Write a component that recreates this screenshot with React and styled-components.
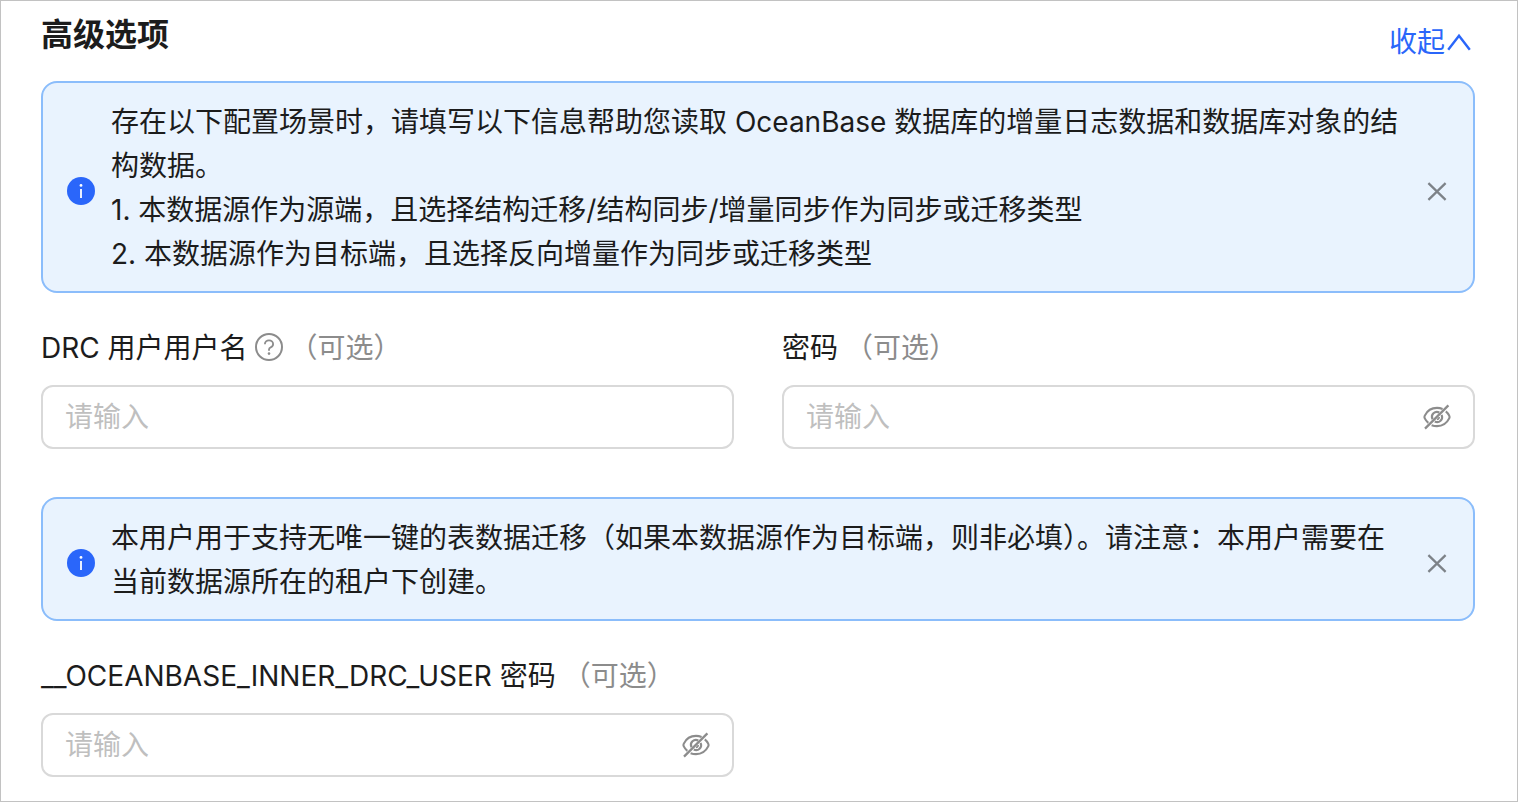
import React from 'react';
import styled, { createGlobalStyle } from 'styled-components';

const GlobalStyle = createGlobalStyle`
    *, *::before, *::after {
        box-sizing: border-box;
    }

    html, body, #root {
        height: 100%;
    }

    body {
        margin: 0;
        background: #fff;
        color: #1c1c1c;
        font-family: Inter, "Noto Sans CJK SC", sans-serif;
        font-size: 28px;
        line-height: 44px;
    }
`;

const Panel = styled.section`
    min-height: 100%;
    padding: 8px 42px 24px 40px;
    border: 1px solid #c2c2c2;
`;

const Header = styled.header`
    display: flex;
    justify-content: space-between;
    align-items: flex-end;
    padding-top: 2px;
    margin-bottom: 16px;
`;

const Title = styled.h2`
    margin: 0;
    padding-bottom: 6px;
    font-size: 32px;
    font-weight: 600;
    line-height: 48px;
`;

const CollapseLink = styled.a`
    display: inline-flex;
    align-items: center;
    gap: 2px;
    padding: 0 4px 1px 0;
    color: #2a66fa;
    text-decoration: none;
`;

const AlertBox = styled.div`
    display: flex;
    align-items: center;
    gap: 16px;
    padding: 17px 24px 15px;
    border: 2px solid #8bbdfb;
    border-radius: 16px;
    background: #e9f3fe;
`;

const AlertIcon = styled.span`
    display: flex;
    flex: none;
    padding-top: 6px;
`;

const AlertText = styled.div`
    flex: 1;
    min-width: 0;

    p {
        margin: 0;
    }
`;

const IconButton = styled.button`
    display: flex;
    flex: none;
    padding: 0;
    border: 0;
    background: none;
    color: #8c8c8c;
    cursor: pointer;
`;

const CloseButton = styled(IconButton)`
    padding-top: 6px;
    color: #7d8288;
`;

const FieldRow = styled.div`
    display: grid;
    grid-template-columns: 1fr 1fr;
    gap: 48px;
    padding-top: 32px;

    & + ${AlertBox} {
        margin-top: 48px;
    }
`;

const FieldHead = styled.div`
    display: flex;
    align-items: center;
    gap: 7px;
    margin-bottom: 16px;
`;

const FieldLabel = styled.label`
    padding-top: 2px;
    line-height: 42px;
`;

const Optional = styled.span`
    padding-top: 2px;
    line-height: 42px;
    color: #8c8c8c;
`;

const InputBox = styled.div`
    display: flex;
    align-items: center;
    gap: 8px;
    height: 64px;
    padding: 0 22px;
    border: 2px solid #d9d9d9;
    border-radius: 12px;
    background: #fff;
`;

const TextInput = styled.input`
    flex: 1;
    min-width: 0;
    padding: 0;
    border: 0;
    outline: 0;
    background: none;
    color: inherit;
    font: inherit;

    &::placeholder {
        color: #bfbfbf;
        opacity: 1;
    }
`;

const ChevronUpIcon = () => (
    <svg width="24" height="24" viewBox="0 0 24 24" fill="none" stroke="currentColor" strokeWidth="2.4" aria-hidden="true">
        <path d="M1.2 19.8 12 5.8l10.800 14" />
    </svg>
);

const InfoIcon = () => (
    <svg width="28" height="28" viewBox="0 0 28 28" aria-hidden="true">
        <circle cx="14" cy="14" r="14" fill="#2a66fa" />
        <circle cx="14" cy="8.4" r="1.4" fill="#fff" />
        <path d="M14 12v9" stroke="#fff" strokeWidth="1.8" />
    </svg>
);

const CloseIcon = () => (
    <svg width="24" height="24" viewBox="0 0 24 24" fill="none" stroke="currentColor" strokeWidth="2.3" aria-hidden="true">
        <path d="M3.4 4.200l17.200 16.600M20.600 4.200L3.400 20.800" />
    </svg>
);

const QuestionIcon = () => (
    <svg width="28" height="28" viewBox="0 0 28 28" fill="none" stroke="currentColor" aria-hidden="true">
        <circle cx="14" cy="14" r="13" strokeWidth="2" />
        <path d="M9.9 11.2c0-2.3 1.8-3.9 4.1-3.9s4.1 1.6 4.1 3.7c0 1.7-1 2.8-2.4 3.4-1.1.5-1.7 1.2-1.7 2.2v1.2" strokeWidth="1.8" />
        <circle cx="14" cy="20.6" r="1.3" fill="currentColor" stroke="none" />
    </svg>
);

const EyeInvisibleIcon = () => (
    <svg width="28" height="28" viewBox="0 0 28 28" fill="none" stroke="currentColor" strokeWidth="2.1" aria-hidden="true">
        <path d="M19.6 6A15 15 0 0 0 14 4.9C8.6 4.9 4.3 7.5 1.8 12.6a3.2 3.2 0 0 0 0 2.8c.9 1.800 2.100 3.300 3.500 4.500" />
        <path d="M8.600 22.200c1.700.6 3.500.9 5.400.9 5.400 0 9.700-2.600 12.200-7.700a3.200 3.200 0 0 0 0-2.800c-.9-1.800-2-3.200-3.400-4.300" />
        <path d="M16.300 9.500a5 5 0 0 0-6.800 6.700" />
        <path d="M11.800 18.500a5 5 0 0 0 6.800-6.600" />
        <path d="M13.900 16.400a2.300 2.300 0 0 0 2.300-2.300" strokeWidth="1.600" />
        <path d="M2 25.600 25.400 2.400" strokeWidth="2.300" />
    </svg>
);

const Alert = ({ children }) => (
    <AlertBox role="note">
        <AlertIcon>
            <InfoIcon />
        </AlertIcon>
        <AlertText>{children}</AlertText>
        <CloseButton type="button" aria-label="关闭">
            <CloseIcon />
        </CloseButton>
    </AlertBox>
);

const Field = ({ id, label, help, password }) => (
    <div>
        <FieldHead>
            <FieldLabel htmlFor={id}>{label}</FieldLabel>
            {help && (
                <IconButton type="button" aria-label="帮助">
                    <QuestionIcon />
                </IconButton>
            )}
            <Optional>（可选）</Optional>
        </FieldHead>
        <InputBox>
            <TextInput id={id} type={password ? 'password' : 'text'} placeholder="请输入" />
            {password && (
                <IconButton type="button" aria-label="显示密码">
                    <EyeInvisibleIcon />
                </IconButton>
            )}
        </InputBox>
    </div>
);

const App = () => {
    return (
        <>
            <GlobalStyle />
            <Panel>
                <Header>
                    <Title>高级选项</Title>
                    <CollapseLink href="#">
                        收起
                        <ChevronUpIcon />
                    </CollapseLink>
                </Header>
                <Alert>
                    <p>存在以下配置场景时，请填写以下信息帮助您读取 OceanBase 数据库的增量日志数据和数据库对象的结构数据。</p>
                    <p>1. 本数据源作为源端，且选择结构迁移/结构同步/增量同步作为同步或迁移类型</p>
                    <p>2. 本数据源作为目标端，且选择反向增量作为同步或迁移类型</p>
                </Alert>
                <FieldRow>
                    <Field id="drc-user" label="DRC 用户用户名" help />
                    <Field id="drc-password" label="密码" password />
                </FieldRow>
                <Alert>
                    <p>本用户用于支持无唯一键的表数据迁移（如果本数据源作为目标端，则非必填）。请注意：本用户需要在当前数据源所在的租户下创建。</p>
                </Alert>
                <FieldRow>
                    <Field id="inner-drc-password" label="__OCEANBASE_INNER_DRC_USER 密码" password />
                </FieldRow>
            </Panel>
        </>
    );
};

export default App;
